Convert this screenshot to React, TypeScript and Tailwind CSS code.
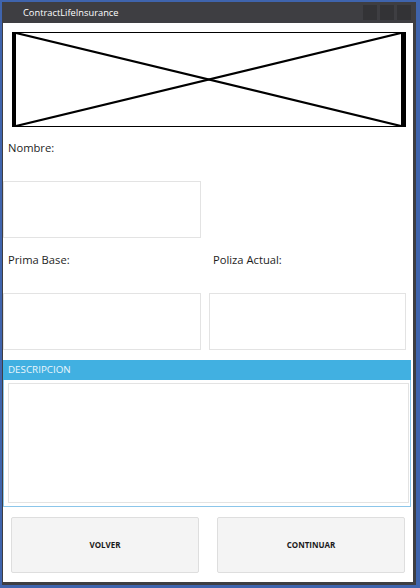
import React from 'react';

const font = { fontFamily: '"Open Sans", "Noto Sans", sans-serif' };

function Placeholder() {
  return (
    <div className="ml-[9px] mt-[9px] w-[394px] h-[95px]">
      <svg width="394" height="95" viewBox="0 0 394 95" className="block">
        <rect x="0" y="0" width="394" height="95" fill="#ffffff" />
        <line x1="0" y1="0.5" x2="394" y2="0.5" stroke="#000" strokeWidth="1" />
        <line x1="0" y1="94.5" x2="394" y2="94.5" stroke="#000" strokeWidth="1" />
        <rect x="0" y="0" width="4" height="95" fill="#000" />
        <rect x="389" y="0" width="5" height="95" fill="#000" />
        <line x1="4" y1="1" x2="389" y2="94" stroke="#000" strokeWidth="2.2" />
        <line x1="4" y1="94" x2="389" y2="1" stroke="#000" strokeWidth="2.2" />
      </svg>
    </div>
  );
}

export default function App() {
  return (
    <div
      className="w-[420px] h-[588px] flex flex-col bg-[#3e3e42] border-t-2 border-l-2 border-r-4 border-b-[3px] border-[#3f64ad]"
      style={font}
    >
      {/* Title bar */}
      <div className="h-[21px] flex items-center pl-[21px] pr-[5px] shrink-0">
        <span className="text-[9.3px] text-white leading-none">ContractLifeInsurance</span>
        <div className="ml-auto flex gap-[3px]">
          <div className="w-[14px] h-[15px] bg-[#333336]" />
          <div className="w-[14px] h-[15px] bg-[#333336]" />
          <div className="w-[14px] h-[15px] bg-[#333336]" />
        </div>
      </div>

      {/* Window body */}
      <div className="flex-1 ml-px mr-[3px] mb-[3px] bg-white flex flex-col text-[#1e1e1e]">
        <Placeholder />

        <div className="mt-[13px] pl-[5px] text-[11.2px] leading-[16px]">Nombre:</div>
        <div className="mt-[25px] w-[198px] h-[57px] border border-[#e3e3e3]" />

        <div className="mt-[14px] flex text-[11.2px] leading-[16px]">
          <div className="w-[206px] pl-[5px]">Prima Base:</div>
          <div className="pl-[4px]">Poliza Actual:</div>
        </div>
        <div className="mt-[25px] flex gap-[8px]">
          <div className="w-[198px] h-[57px] border border-[#e3e3e3]" />
          <div className="w-[197px] h-[57px] border border-[#e3e3e3]" />
        </div>

        {/* Description panel */}
        <div className="mt-[10px] w-[408px] h-[147px] border border-[#8cc6ea] flex flex-col">
          <div className="-mx-px -mt-px h-[20px] bg-[#41b0e1] flex items-center pl-[5px]">
            <span className="text-[9.8px] text-[#eaf6fc] leading-none">DESCRIPCION</span>
          </div>
          <div className="ml-[4px] mt-[3px] w-[401px] h-[120px] border border-[#e3e3e3]" />
        </div>

        {/* Buttons */}
        <div className="mt-[10px] flex pl-[8px] gap-[18px]">
          <button className="w-[188px] h-[56px] bg-[#f4f4f4] border border-[#dedede] rounded-[2px] text-[8px] font-bold text-[#1a1a1a]">
            VOLVER
          </button>
          <button className="w-[188px] h-[56px] bg-[#f4f4f4] border border-[#dedede] rounded-[2px] text-[8px] font-bold text-[#1a1a1a]">
            CONTINUAR
          </button>
        </div>
      </div>
    </div>
  );
}
